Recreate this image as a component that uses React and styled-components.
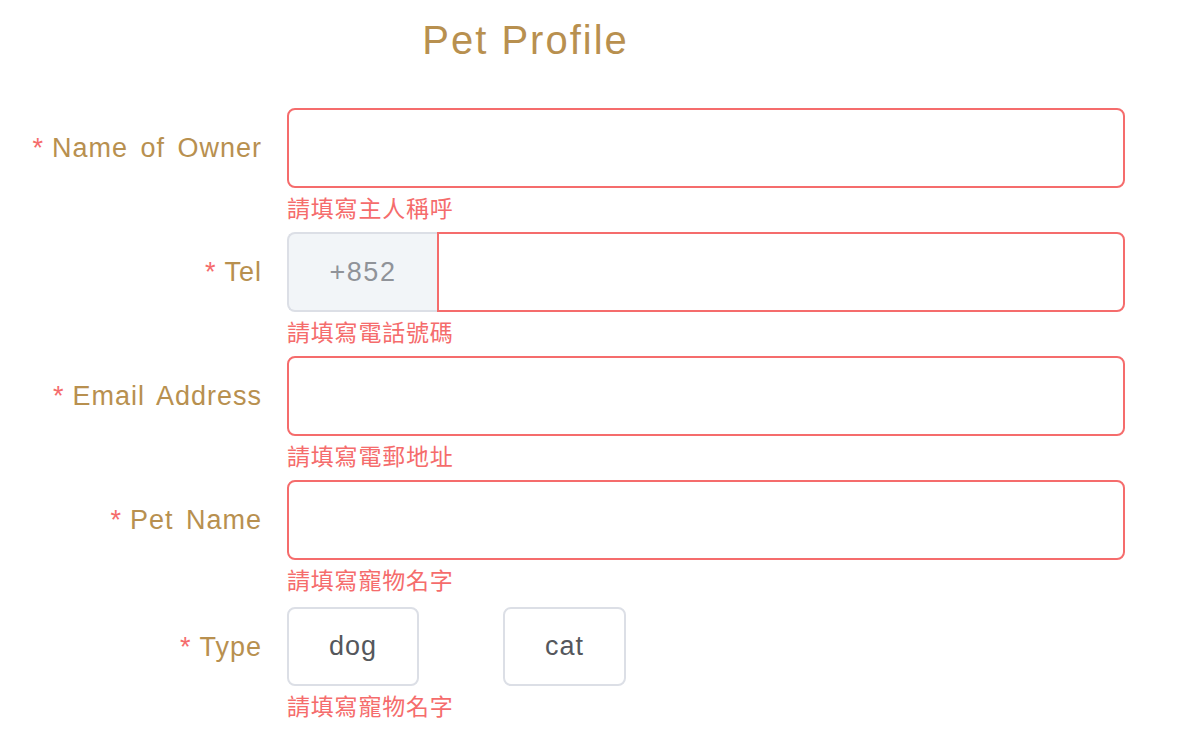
import React from "react";
import styled, { createGlobalStyle } from "styled-components";

const GlobalStyle = createGlobalStyle`
  body {
    margin: 0;
    background: #fff;
    font-family: "Liberation Sans", "Noto Sans CJK TC", sans-serif;
  }
`;

const Page = styled.div`
  width: 1188px;
  min-height: 752px;
`;

const Title = styled.h1`
  width: 1051px;
  margin: 16px 0 44px;
  text-align: center;
  font-size: 40px;
  line-height: 48px;
  font-weight: 400;
  letter-spacing: 2px;
  color: #b8904f;
`;

const Row = styled.div`
  display: grid;
  grid-template-columns: 287px 838px;
  margin-bottom: 11px;
  padding-top: ${(p) => (p.$offset ? "3px" : "0")};
`;

const Label = styled.label`
  height: 80px;
  padding-right: 25px;
  display: flex;
  align-items: center;
  justify-content: flex-end;
  font-size: 27px;
  letter-spacing: 1px;
  word-spacing: 4px;
  color: #b8904f;
`;

const Star = styled.span`
  color: #f56c6c;
  margin-right: 8px;
`;

const Field = styled.div`
  display: flex;
  flex-direction: column;
`;

const InputGroup = styled.div`
  display: flex;
  height: 80px;
`;

const Prepend = styled.div`
  width: 150px;
  flex: none;
  box-sizing: border-box;
  display: flex;
  align-items: center;
  justify-content: center;
  background: #f2f5f8;
  border: 2px solid #dcdfe6;
  border-right: none;
  border-radius: 8px 0 0 8px;
  font-size: 27px;
  letter-spacing: 1.5px;
  color: #909399;
`;

const Input = styled.input`
  flex: 1;
  min-width: 0;
  height: 80px;
  box-sizing: border-box;
  border: 2px solid #f56c6c;
  border-radius: ${(p) => (p.$joined ? "0 8px 8px 0" : "8px")};
  outline: none;
  padding: 0 24px;
  font-size: 26px;
  font-family: inherit;
  background: #fff;
`;

const Choices = styled.div`
  display: flex;
  gap: 84px;
`;

const Choice = styled.button`
  height: 79px;
  padding: 0 40px;
  box-sizing: border-box;
  background: #fff;
  border: 2px solid #dcdfe6;
  border-radius: 8px;
  font-family: inherit;
  font-size: 27px;
  letter-spacing: 1px;
  color: #55575c;
  cursor: pointer;
`;

const Error = styled.div`
  padding-top: 5px;
  font-size: 23px;
  line-height: 28px;
  letter-spacing: 0.8px;
  color: #f56c6c;
  font-family: "Noto Sans CJK TC", sans-serif;
`;

function FormRow({ label, error, offset, children }) {
  return (
    <Row $offset={offset}>
      <Label>
        <Star>*</Star>
        {label}
      </Label>
      <Field>
        {children}
        <Error>{error}</Error>
      </Field>
    </Row>
  );
}

export default function App() {
  return (
    <Page>
      <GlobalStyle />
      <Title>Pet Profile</Title>
      <FormRow label="Name of Owner" error="請填寫主人稱呼">
        <InputGroup>
          <Input />
        </InputGroup>
      </FormRow>
      <FormRow label="Tel" error="請填寫電話號碼">
        <InputGroup>
          <Prepend>+852</Prepend>
          <Input $joined />
        </InputGroup>
      </FormRow>
      <FormRow label="Email Address" error="請填寫電郵地址">
        <InputGroup>
          <Input />
        </InputGroup>
      </FormRow>
      <FormRow label="Pet Name" error="請填寫寵物名字">
        <InputGroup>
          <Input />
        </InputGroup>
      </FormRow>
      <FormRow label="Type" error="請填寫寵物名字" offset>
        <Choices>
          <Choice>dog</Choice>
          <Choice>cat</Choice>
        </Choices>
      </FormRow>
    </Page>
  );
}
